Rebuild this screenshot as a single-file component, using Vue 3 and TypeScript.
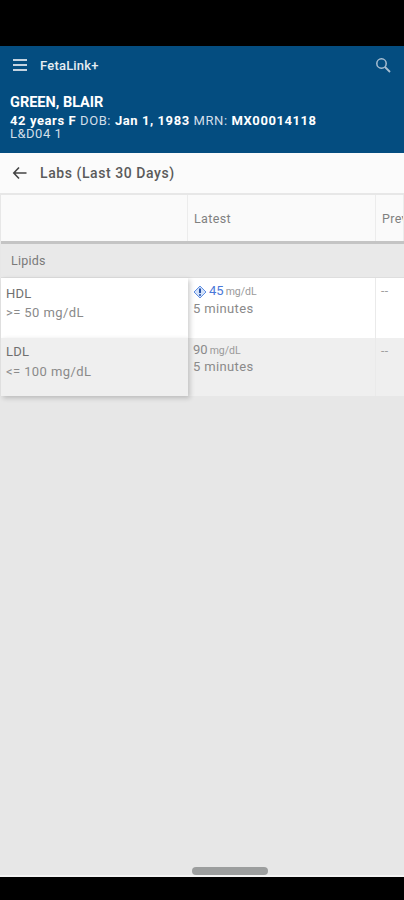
<script setup lang="ts">
interface LabRow {
  name: string
  range: string
  value: string
  flagged?: boolean
}

const rows: LabRow[] = [
  { name: 'HDL', range: '>= 50 mg/dL', value: '45', flagged: true },
  { name: 'LDL', range: '<= 100 mg/dL', value: '90' },
]
</script>

<template>
  <div class="screen">
    <div class="status-bar" />

    <header class="app-header">
      <div class="toolbar">
        <svg class="menu-icon" width="16" height="14" viewBox="0 0 16 14" aria-hidden="true">
          <path d="M1 2h14M1 7h14M1 12h14" stroke="#c4d3e0" stroke-width="2" fill="none" />
        </svg>
        <span class="app-name">FetaLink+</span>
        <svg class="search-icon" width="16" height="16" viewBox="0 0 16 16" aria-hidden="true">
          <circle cx="6.5" cy="6.5" r="4.7" stroke="#a9bfd2" stroke-width="1.5" fill="none" />
          <path d="M10 10l5 5" stroke="#a9bfd2" stroke-width="1.8" fill="none" />
        </svg>
      </div>
      <div class="patient">
        <div class="patient-name">GREEN, BLAIR</div>
        <div class="patient-info"><b>42 years F</b> <span class="dim">DOB:</span> <b>Jan 1, 1983</b> <span class="dim">MRN:</span> <b>MX00014118</b></div>
        <div class="patient-bed">L&amp;D04 1</div>
      </div>
    </header>

    <div class="subheader">
      <svg width="16" height="14" viewBox="0 0 16 14" aria-hidden="true">
        <path d="M14.5 7H2M7 1.5L1.8 7 7 12.5" stroke="#444" stroke-width="1.6" fill="none" />
      </svg>
      <span>Labs (Last 30 Days)</span>
    </div>

    <main class="content">
      <div class="table">
        <div class="head-row">
          <div class="cell-head" />
          <div class="cell-head">Latest</div>
          <div class="cell-head">Previous</div>
        </div>
        <div class="group-row">Lipids</div>
        <div class="body-wrap">
          <div v-for="(row, i) in rows" :key="row.name" class="lab-row" :class="{ alt: i % 2 === 1 }">
            <div class="cell-name">
              <div class="lab-name">{{ row.name }}</div>
              <div class="lab-range">{{ row.range }}</div>
            </div>
            <div class="cell-value">
              <div class="value-line" :class="{ flagged: row.flagged }">
                <svg v-if="row.flagged" class="flag" width="14" height="14" viewBox="0 0 14 14" aria-hidden="true">
                  <path d="M7 1l6 6-6 6-6-6z" fill="#d3e1f8" stroke="#5f8fe4" stroke-width="1" />
                  <path d="M7 3.5v4.5" stroke="#2450a8" stroke-width="2" />
                  <circle cx="7" cy="10" r="1" fill="#2450a8" />
                </svg>
                <span class="value">{{ row.value }}</span>
                <span class="unit">mg/dL</span>
              </div>
              <div class="age">5 minutes</div>
            </div>
            <div class="cell-prev">--</div>
          </div>
        </div>
      </div>
      <div class="scroll-thumb" />
    </main>

    <div class="bottom-bar" />
  </div>
</template>

<style>
html,
body {
  margin: 0;
  background: #000;
}
</style>

<style scoped>
.screen {
  width: 404px;
  height: 900px;
  display: flex;
  flex-direction: column;
  overflow: hidden;
  background: #000;
  font-family: Roboto, "Liberation Sans", sans-serif;
}
.status-bar {
  height: 46px;
  flex: none;
}
.app-header {
  height: 107px;
  flex: none;
  box-sizing: border-box;
  background: #044d80;
  color: #fff;
}
.toolbar {
  height: 38px;
  display: flex;
  align-items: center;
  padding: 0 13px 0 12px;
  box-sizing: border-box;
}
.app-name {
  margin-left: 12px;
  font-size: 13px;
  font-weight: 500;
  letter-spacing: 0.2px;
  color: #e6edf3;
}
.search-icon {
  margin-left: auto;
}
.patient {
  padding: 10px 10px 0;
}
.patient-name {
  font-size: 14.5px;
  font-weight: 700;
  line-height: 18px;
}
.patient-info {
  margin-top: 1px;
  font-size: 13px;
  line-height: 15px;
  letter-spacing: 0.58px;
  white-space: nowrap;
}
.patient-info b {
  font-weight: 700;
}
.dim {
  color: #d3dfe9;
}
.patient-bed {
  font-size: 13px;
  line-height: 11px;
  letter-spacing: 0.5px;
  color: #d3dfe9;
}
.subheader {
  height: 40px;
  flex: none;
  display: flex;
  align-items: center;
  gap: 12px;
  padding-left: 12px;
  box-sizing: border-box;
  background: #fbfbfb;
  color: #5a5a5a;
  font-size: 14px;
  font-weight: 500;
  letter-spacing: 0.57px;
}
.content {
  position: relative;
  flex: 1;
  background: #e7e7e7;
  padding-top: 2px;
}
.table {
  overflow: hidden;
  padding-left: 1px;
}
.head-row {
  height: 46px;
  display: grid;
  grid-template-columns: 187px 188px 1fr;
  background: #fafafa;
  border-bottom: 3px solid #c4c4c4;
}
.cell-head {
  display: flex;
  align-items: center;
  padding-left: 6px;
  border-right: 1px solid #ececec;
  color: #808080;
  font-size: 12.5px;
  letter-spacing: 0.35px;
  white-space: nowrap;
  overflow: hidden;
}
.group-row {
  height: 34px;
  display: flex;
  align-items: center;
  padding-left: 10px;
  background: #e9e9e9;
  color: #7a7a7a;
  font-size: 12.5px;
  letter-spacing: 0.2px;
  border-bottom: 1px solid #dedede;
  box-sizing: border-box;
}
.body-wrap {
  padding-bottom: 10px;
}
.lab-row {
  display: grid;
  grid-template-columns: 187px 188px 1fr;
  height: 60px;
  background: #fff;
}
.lab-row.alt {
  height: 58px;
  background: #efefef;
}
.cell-name {
  position: relative;
  padding: 7px 0 0 5px;
  background: inherit;
  box-shadow: 2px 2px 5px rgba(0, 0, 0, 0.2);
}
.alt .cell-name {
  padding-top: 5px;
}
.lab-name {
  font-size: 13px;
  line-height: 18px;
  letter-spacing: 0.2px;
  color: #707070;
}
.lab-range {
  font-size: 13px;
  line-height: 20px;
  letter-spacing: 0.4px;
  color: #8a8a8a;
}
.alt .lab-range {
  margin-top: 1px;
}
.cell-value {
  padding: 4px 0 0 5px;
  border-right: 1px solid #eaeaea;
}
.value-line {
  display: flex;
  align-items: baseline;
  height: 17px;
  color: #8a8a8a;
  font-size: 13px;
}
.value-line.flagged {
  margin-top: 1px;
}
.value-line.flagged .value {
  color: #4a78d8;
}
.flag {
  align-self: center;
  margin-right: 2px;
}
.unit {
  margin-left: 2px;
  font-size: 10.5px;
  color: #9a9a9a;
}
.age {
  font-size: 13px;
  line-height: 17px;
  letter-spacing: 0.35px;
  color: #8a8a8a;
}
.alt .age {
  margin-top: -1px;
}
.cell-prev {
  padding: 4px 0 0 5px;
  color: #a0a0a0;
  font-size: 12px;
  line-height: 18px;
  letter-spacing: 0.4px;
}
.scroll-thumb {
  position: absolute;
  left: 192px;
  bottom: 0;
  width: 76px;
  height: 8px;
  border-radius: 4px;
  background: #9c9e9e;
}
.bottom-bar {
  height: 25px;
  flex: none;
  box-sizing: border-box;
  background: #000;
  border-top: 2px solid #f4f4f4;
}
</style>
